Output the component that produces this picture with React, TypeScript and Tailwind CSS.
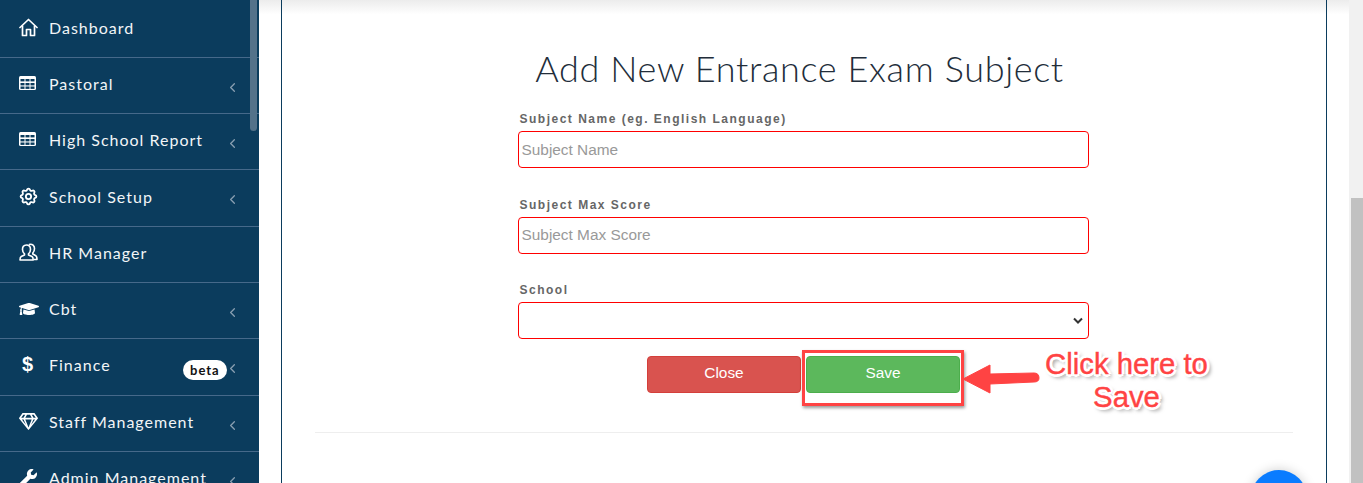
import { ChevronLeft } from "lucide-react";
import { FaGraduationCap, FaRegGem, FaWrench } from "react-icons/fa";
import { TbSettings } from "react-icons/tb";
import type { ReactNode } from "react";

type MenuItem = {
  label: string;
  icon: ReactNode;
  arrow?: boolean;
  beta?: boolean;
};

function HomeIcon() {
  return (
    <svg width="19" height="19" viewBox="0 0 19 19" fill="none" stroke="#fff" strokeWidth="1.7" strokeLinejoin="round" strokeLinecap="round">
      <path d="M1 9.5 L9.5 1.5 L18 9.5" />
      <path d="M3.5 8 V17.5 H7.5 V11.5 H11.5 V17.5 H15.5 V8" />
    </svg>
  );
}

function TableIcon() {
  return (
    <svg className="-mt-[2px]" width="17" height="14" viewBox="0 0 17 14">
      <rect width="17" height="14" rx="1.5" fill="#fff" />
      {[3, 7, 10.5].map((y) =>
        [1.5, 6.5, 11.5].map((x) => (
          <rect key={`${x}-${y}`} x={x} y={y} width="4" height="2.4" fill="#0b3c5d" />
        ))
      )}
    </svg>
  );
}

function StaffIcon() {
  return (
    <svg className="-mt-[1px]" width="19" height="19" viewBox="0 0 19 19" fill="none" stroke="#fff" strokeWidth="1.6" strokeLinejoin="round">
      <path d="M7.5 2 C10.5 2 11.5 4 11.5 6.5 C11.5 8.5 10.5 10 9.5 10.8 V12 L13 13.5 C14 14 14.2 15 14.2 17 H1 C1 15 1.2 14 2.2 13.5 L5.5 12 V10.8 C4.5 10 3.5 8.5 3.5 6.5 C3.5 4 4.5 2 7.5 2 Z" />
      <path d="M10 1.5 C13.5 0.5 15.5 3 15.5 5.5 C15.5 7.5 14.8 9 13.8 10 V11 L16.5 12.5 C17.5 13 18 14 18 16.5 H14.5" />
    </svg>
  );
}

const menu: MenuItem[] = [
  { label: "Dashboard", icon: <HomeIcon /> },
  { label: "Pastoral", icon: <TableIcon />, arrow: true },
  { label: "High School Report", icon: <TableIcon />, arrow: true },
  { label: "School Setup", icon: <TbSettings size={21} strokeWidth={2.1} className="-ml-[1px]" />, arrow: true },
  { label: "HR Manager", icon: <StaffIcon /> },
  { label: "Cbt", icon: <FaGraduationCap size={20} />, arrow: true },
  {
    label: "Finance",
    icon: <span className="-mt-[2px] pl-[3px] font-['Liberation_Sans',sans-serif] text-[20px] font-bold leading-none tracking-normal">$</span>,
    arrow: true,
    beta: true,
  },
  { label: "Staff Management", icon: <FaRegGem size={19} />, arrow: true },
  { label: "Admin Management", icon: <FaWrench size={18} />, arrow: true },
];

function Sidebar() {
  return (
    <aside className="relative w-[259px] shrink-0 overflow-hidden bg-[#0b3c5d] pt-[1.5px] font-['Lato',sans-serif] text-[16px] tracking-[1px] text-[#f2f5f7]">
      {menu.map((item) => (
        <div
          key={item.label}
          className="relative flex h-[56.3px] items-center border-b border-[#46698a] pb-[3px] pl-[19px]"
        >
          <span className="flex w-[30px] shrink-0 items-center text-white">{item.icon}</span>
          <span className="whitespace-nowrap">{item.label}</span>
          {item.beta && (
            <span className="absolute left-[183px] top-[21px] rounded-full bg-white px-[7px] text-[13px] font-bold leading-[20px] text-[#111]">
              beta
            </span>
          )}
          {item.arrow && (
            <ChevronLeft size={15} className="absolute left-[225px] top-[22px] text-[#8aa0b2]" />
          )}
        </div>
      ))}
      <div className="absolute right-[2px] top-0 h-[131px] w-[7px] rounded-b bg-[#54728a]" />
    </aside>
  );
}

function Field({ label, placeholder }: { label: string; placeholder: string }) {
  return (
    <div className="mb-[27.5px]">
      <label className="mb-[3px] block pl-[2px] text-[12px] font-bold leading-[18px] tracking-[1.5px] text-[#666]">
        {label}
      </label>
      <input
        placeholder={placeholder}
        className="block h-[37px] w-full rounded border border-[#f00] px-[3px] text-[15.4px] placeholder:text-[#999]"
      />
    </div>
  );
}

function Annotation() {
  return (
    <>
      <div className="absolute left-[802px] top-[350px] h-[56px] w-[162px] border-[3px] border-[#ff4343] shadow-[1px_2px_3px_rgba(0,0,0,0.4)]" />
      <svg className="absolute left-[960px] top-[360px]" width="82" height="36" viewBox="0 0 82 36">
        <path
          d="M3 19 L30 5 L30 14 L74 13 Q79 13 79 18 Q79 22 74 22 L30 24 L30 33 Z"
          fill="#ff4343"
          stroke="#ff4343"
          strokeWidth="1"
          strokeLinejoin="round"
        />
      </svg>
      <div className="absolute left-[1029px] top-[347px] w-[195px] text-center text-[29.3px] leading-[33px] text-[#ff4343] [-webkit-text-stroke:0.4px_#ff4343] [text-shadow:-2px_-2px_0_#fff,2px_-2px_0_#fff,-2px_2px_0_#fff,2px_2px_0_#fff,0_-3px_0_#fff,0_3px_0_#fff,-3px_0_0_#fff,3px_0_0_#fff,3px_3px_4px_rgba(0,0,0,0.6)]">
        Click here to
        <br />
        Save
      </div>
    </>
  );
}

export default function App() {
  return (
    <div className="relative flex h-[483px] w-[1363px] overflow-hidden bg-white font-['Liberation_Sans',Arial,sans-serif]">
      <Sidebar />
      <main className="min-w-0 flex-1 bg-gradient-to-b from-[#ececec] from-0% to-white to-[3%] pl-[22px] pr-[22px]">
        <div className="h-full border-x border-[#0b3c5d] px-[33px]">
          <h1 className="pr-[9px] pt-[45px] text-center font-['Lato',sans-serif] text-[36px] font-light leading-[46px] tracking-[0.65px] text-[#222d3a]">
            Add New Entrance Exam Subject
          </h1>
          <form className="relative -left-px mx-auto mt-[19px] w-[571px]">
            <Field label="Subject Name (eg. English Language)" placeholder="Subject Name" />
            <Field label="Subject Max Score" placeholder="Subject Max Score" />
            <div className="mb-[17px]">
              <label className="mb-[3px] block pl-[2px] text-[12px] font-bold leading-[18px] tracking-[1.5px] text-[#666]">
                School
              </label>
              <div className="relative">
                <select className="block h-[37px] w-full appearance-none rounded border border-[#f00] bg-white" />
                <svg className="absolute right-[5px] top-[15px]" width="12" height="8" viewBox="0 0 12 8">
                  <path d="M2 1.5 L6 5.5 L10 1.5" fill="none" stroke="#333" strokeWidth="2" />
                </svg>
              </div>
            </div>
            <div className="flex justify-center gap-[5px]">
              <button type="button" className="h-[37px] w-[154px] rounded border border-[#d43f3a] bg-[#d9534f] pb-[3px] pl-[1px] text-[15.4px] text-white">
                Close
              </button>
              <button type="button" className="h-[37px] w-[154px] rounded border border-[#4cae4c] bg-[#5cb85c] pb-[3px] pl-[1px] text-[15.4px] text-white">
                Save
              </button>
            </div>
          </form>
          <hr className="mt-[39px] border-[#eee]" />
        </div>
      </main>
      <div className="flex w-[14px] shrink-0 flex-col bg-[#f1f1f1] pl-[2px] pt-[198px]">
        <div className="flex-1 bg-[#c1c1c1]" />
      </div>
      <Annotation />
      <div className="absolute left-[1251px] top-[470px] h-[56px] w-[56px] rounded-full bg-[#0a7cff] shadow-[0_0_12px_rgba(0,0,0,0.2)]" />
    </div>
  );
}
